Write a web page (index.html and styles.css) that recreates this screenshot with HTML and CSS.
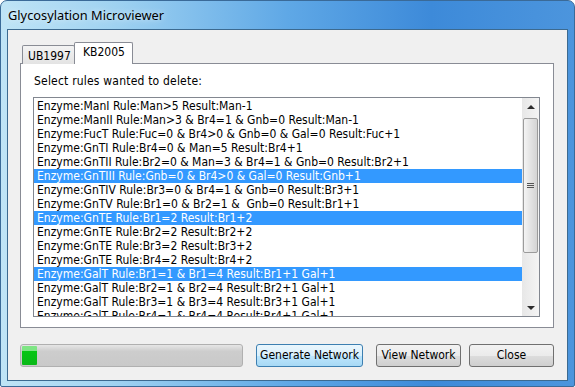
FILE: index.html
```html
<!DOCTYPE html>
<html lang="en">

<head>
    <meta charset="UTF-8">
    <title>Glycosylation Microviewer</title>
    <link rel="stylesheet" href="styles.css">
</head>

<body>
    <div class="window">
        <div class="titlebar">
            <span class="title">Glycosylation Microviewer</span>
        </div>
        <div class="client">
            <div class="tabs">
                <div class="tab">UB1997</div>
                <div class="tab active">KB2005</div>
            </div>
            <div class="pane">
                <div class="caption">Select rules wanted to delete:</div>
                <div class="listbox">
                    <ul class="items">
                        <li>Enzyme:ManI Rule:Man&gt;5 Result:Man-1</li>
                        <li>Enzyme:ManII Rule:Man&gt;3 &amp; Br4=1 &amp; Gnb=0 Result:Man-1</li>
                        <li>Enzyme:FucT Rule:Fuc=0 &amp; Br4&gt;0 &amp; Gnb=0 &amp; Gal=0 Result:Fuc+1</li>
                        <li>Enzyme:GnTI Rule:Br4=0 &amp; Man=5 Result:Br4+1</li>
                        <li>Enzyme:GnTII Rule:Br2=0 &amp; Man=3 &amp; Br4=1 &amp; Gnb=0 Result:Br2+1</li>
                        <li class="selected">Enzyme:GnTIII Rule:Gnb=0 &amp; Br4&gt;0 &amp; Gal=0 Result:Gnb+1</li>
                        <li>Enzyme:GnTIV Rule:Br3=0 &amp; Br4=1 &amp; Gnb=0 Result:Br3+1</li>
                        <li>Enzyme:GnTV Rule:Br1=0 &amp; Br2=1 &amp;&nbsp; Gnb=0 Result:Br1+1</li>
                        <li class="selected">Enzyme:GnTE Rule:Br1=2 Result:Br1+2</li>
                        <li>Enzyme:GnTE Rule:Br2=2 Result:Br2+2</li>
                        <li>Enzyme:GnTE Rule:Br3=2 Result:Br3+2</li>
                        <li>Enzyme:GnTE Rule:Br4=2 Result:Br4+2</li>
                        <li class="selected">Enzyme:GalT Rule:Br1=1 &amp; Br1=4 Result:Br1+1 Gal+1</li>
                        <li>Enzyme:GalT Rule:Br2=1 &amp; Br2=4 Result:Br2+1 Gal+1</li>
                        <li>Enzyme:GalT Rule:Br3=1 &amp; Br3=4 Result:Br3+1 Gal+1</li>
                        <li>Enzyme:GalT Rule:Br4=1 &amp; Br4=4 Result:Br4+1 Gal+1</li>
                    </ul>
                    <div class="scrollbar">
                        <div class="arrow up"></div>
                        <div class="track">
                            <div class="thumb"><span class="grip"></span></div>
                        </div>
                        <div class="arrow down"></div>
                    </div>
                </div>
            </div>
            <div class="footer">
                <div class="progress"><div class="chunk" style="width: 7%"></div></div>
                <button class="btn default generate">Generate Network</button>
                <button class="btn view">View Network</button>
                <button class="btn close">Close</button>
            </div>
        </div>
    </div>
</body>
</html>
```

FILE: styles.css
```css
body {
    margin: 0;
    background: #ffffff;
    font-family: "DejaVu Sans", Tahoma, sans-serif;
    font-stretch: condensed;
    font-size: 11px;
    color: #000000;
}

.window {
    width: 575px;
    height: 387px;
    box-sizing: border-box;
    display: flex;
    flex-direction: column;
    padding: 0 6px 5px 6px;
    border: 1px solid #3a6a98;
    border-radius: 7px 7px 2px 2px;
    background: linear-gradient(to right, #bfe4f6 0%, #9fd2f1 20%, #5fa8e6 50%, #3d8ad9 75%, #4c95dd 100%);
}

.titlebar {
    height: 28px;
    flex-shrink: 0;
    display: flex;
    align-items: center;
}

.title {
    font-family: "Noto Sans", "Open Sans", sans-serif;
    font-stretch: normal;
    font-size: 12.8px;
    padding-left: 1px;
    margin-top: -1px;
    text-shadow: 0 0 6px rgba(255, 255, 255, 0.8);
}

.client {
    flex: 1;
    min-height: 0;
    display: flex;
    flex-direction: column;
    background: #f0f0f0;
    border: 1px solid #3c6a90;
    padding: 12px 13px 13px 12px;
}

/* tabs */
.tabs {
    display: flex;
    align-items: flex-end;
    flex-shrink: 0;
    padding-left: 2px;
    margin-bottom: -1px;
    position: relative;
    z-index: 1;
}

.tab {
    height: 19px;
    line-height: 20px;
    padding: 0 5px;
    border: 1px solid #898c95;
    border-bottom: none;
    border-radius: 2px 2px 0 0;
    background: linear-gradient(#f3f3f3, #e3e3e3);
    box-sizing: border-box;
    width: 53px;
    font-size: 12px;
}

.tab.active {
    height: 22px;
    width: 59px;
    line-height: 18px;
    margin-left: -1px;
    background: #ffffff;
    padding-left: 8px;
}

.pane {
    flex: 1;
    min-height: 0;
    display: flex;
    flex-direction: column;
    background: #ffffff;
    border: 1px solid #898c95;
    padding: 0 13px 10px 12px;
}

.caption {
    margin-top: 10px;
    margin-bottom: 9px;
    padding-left: 1px;
    line-height: 14px;
    font-size: 12px;
    letter-spacing: 0.2px;
}

/* list */
.listbox {
    flex: 1;
    min-height: 0;
    display: flex;
    border: 1px solid #828790;
    overflow: hidden;
}

.items {
    flex: 1;
    margin: 0;
    padding: 1px 0 0 0;
    list-style: none;
    overflow: hidden;
}

.items li {
    height: 14px;
    line-height: 14px;
    padding-left: 3px;
    white-space: nowrap;
    font-size: 12px;
}

.items li.selected {
    background: #3399ff;
    color: #ffffff;
}

.scrollbar {
    width: 17px;
    display: flex;
    flex-direction: column;
    background: linear-gradient(to right, #e7e7e7, #f4f4f4);
}

.arrow {
    height: 17px;
    display: flex;
    justify-content: center;
    align-items: center;
}

.arrow.up::before {
    content: "";
    border-left: 4px solid transparent;
    border-right: 4px solid transparent;
    border-bottom: 4px solid #2c2c2c;
}

.arrow.down::before {
    content: "";
    border-left: 4px solid transparent;
    border-right: 4px solid transparent;
    border-top: 4px solid #2c2c2c;
}

.track {
    flex: 1;
    padding-top: 3px;
}

.thumb {
    height: 133px;
    margin: 0 1px;
    border: 1px solid #9b9b9b;
    border-radius: 2px;
    background: linear-gradient(to right, #f4f4f4, #e3e3e3 50%, #d4d4d4);
    display: flex;
    justify-content: center;
    align-items: center;
}

.grip {
    width: 7px;
    height: 5px;
    background: repeating-linear-gradient(#555555 0, #555555 1px, transparent 1px, transparent 2px);
}

/* bottom row */
.footer {
    display: flex;
    align-items: center;
    flex-shrink: 0;
    margin-top: 15px;
    height: 24px;
}

.progress {
    width: 223px;
    height: 23px;
    box-sizing: border-box;
    border: 1px solid #b0b0b0;
    border-radius: 3px;
    background: linear-gradient(#e6e6e6, #cdcdcd 30%, #c9c9c9);
    padding: 1px;
    margin-right: 13px;
}

.chunk {
    height: 100%;
    border-radius: 1px;
    background: linear-gradient(#7ee584 0, #7ee584 25%, #06c613 25%, #0ab818 100%);
}

.btn {
    height: 23px;
    box-sizing: border-box;
    border: 1px solid #707070;
    border-radius: 3px;
    background: linear-gradient(#f2f2f2 0, #ebebeb 50%, #dddddd 50%, #cfcfcf 100%);
    font-family: "DejaVu Sans", Tahoma, sans-serif;
    font-stretch: condensed;
    font-size: 12px;
    color: #000000;
    padding: 0;
}

.btn.default {
    border-color: #3c7fb1;
    background: linear-gradient(#eaf6fd 0, #d9f0fc 50%, #bee6fd 50%, #a7d9f5 100%);
}

.generate {
    width: 107px;
    margin-right: 13px;
}

.view {
    width: 85px;
    margin-right: 8px;
}

.close {
    width: 85px;
}
```
